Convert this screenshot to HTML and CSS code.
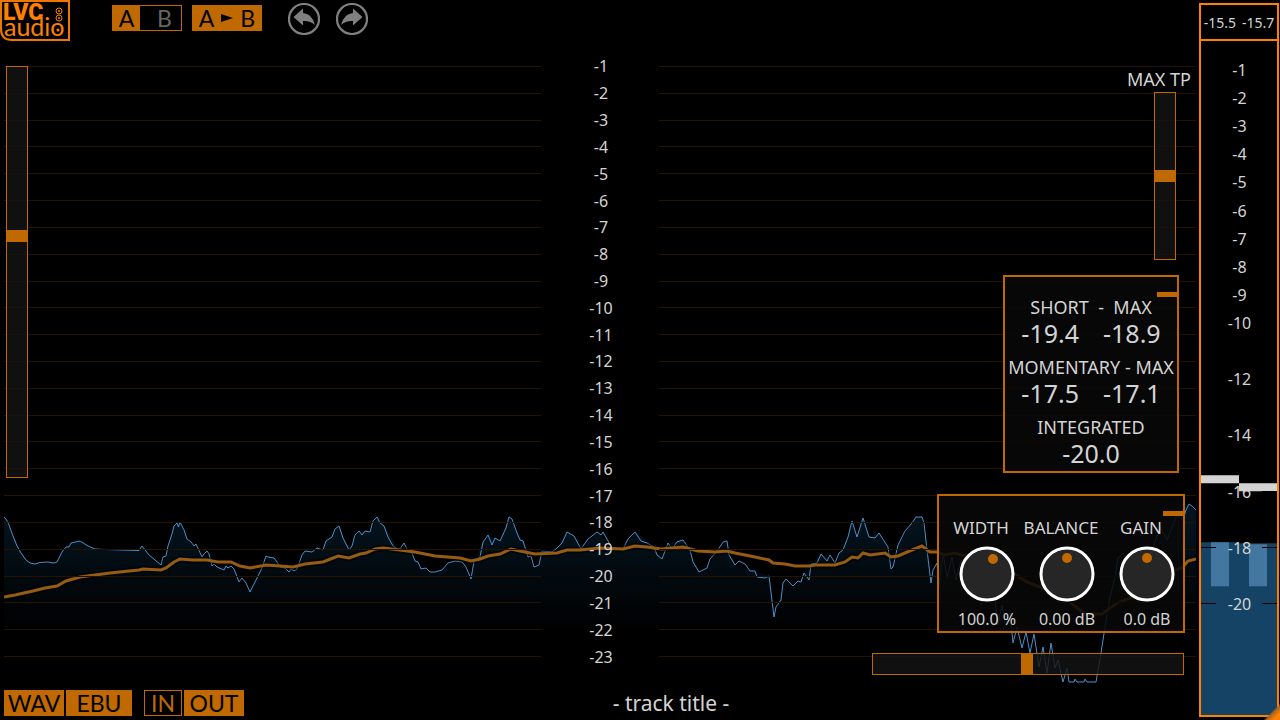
FILE: index.html
```html
<!DOCTYPE html>
<html lang="en">
<head>
<meta charset="utf-8">
<meta name="viewport" content="width=device-width, initial-scale=1">
<title>LVC Audio meter</title>
<link rel="stylesheet" href="styles.css">
</head>
<body>
<div class="app">
  <main class="main">
    <header class="toolbar">
      <svg class="logo" viewBox="0 0 70 41" role="img" aria-label="LVC audio">
        <path d="M1 1H69V40H12Q1 40 1 29Z" fill="none" stroke="#ef7600" stroke-width="2"/>
        <text x="3" y="20" class="logo-top">LVC</text>
        <text x="4" y="36" class="logo-name">audio</text>
        <g fill="none" stroke="#ff8000" stroke-width="1">
          <circle cx="59" cy="11" r="3"/><circle cx="59" cy="18" r="3"/>
        </g>
        <g fill="#ff8000"><circle cx="59" cy="11" r="1"/><circle cx="59" cy="18" r="1"/><circle cx="58" cy="30" r="1.500"/></g>
      </svg>
      <button class="toggle" type="button" aria-label="Switch A and B"><span class="toggle-on">A</span><span class="toggle-off">B</span></button>
      <button class="btn copy" type="button" aria-label="Copy A to B">A<svg viewBox="0 0 12 8" width="12" height="8" aria-hidden="true"><path d="M0 0L12 4L0 8Z"/></svg>B</button>
      <button class="round undo" type="button" aria-label="Undo">
        <svg viewBox="0 0 32 32"><circle cx="16" cy="16" r="15" fill="none" stroke="#808080" stroke-width="2.200"/><path d="M5.500 14L15 5.500V10Q24 10.500 27 22Q22 17.500 15 18V22.500Z" fill="#808080"/></svg>
      </button>
      <button class="round" type="button" aria-label="Redo">
        <svg viewBox="0 0 32 32"><circle cx="16" cy="16" r="15" fill="none" stroke="#808080" stroke-width="2.200"/><path d="M26.500 14L17 5.500V10Q8 10.500 5 22Q10 17.500 17 18V22.500Z" fill="#808080"/></svg>
      </button>
    </header>

    <section class="chart" aria-label="Loudness history">
      <svg class="curves" viewBox="4 53 1192 631" preserveAspectRatio="none" aria-hidden="true">
        <defs>
          <linearGradient id="fade" gradientUnits="userSpaceOnUse" x1="0" y1="515" x2="0" y2="630">
            <stop offset="0" stop-color="#04141f"/><stop offset="1" stop-color="#000000"/>
          </linearGradient>
          <path id="momentary" d="M4 517L6 519L9 525L13 536L17 546L21 553L26 560L30 563L35 564L40 562.500L48 562L53 563L57 562L62 552L66 547L69 547L71 543L80 541L88 546L95 549L105 549.500L139 550.500L142 546L149 555L161 565L163 557L166 556L168 546L172 534L174 526L177 523L178.500 527L180 522L184 530L187 539L191 542L194 546L196 544L202 557L204 554L207 551L209 554L212 566L214 564L217 567L224 570L226 566L228 568L231 566L234 569L239 582L242 578L246 583L250 592L253 586L257 578L262 568L266 556L268 557L274 558L277 562L280 567L285 568L289 572L291 569L294 571L297 569L302 555L305 551L312 552L317 548L323 550L326 541L332 537L335 529L339 526L343 538L349 550L352 546L355 535L359 531L362 535L365 531L370 532L373 521L377 517L380 523L384 526L388 537L393 546L399 550L404 543L407 549L412 553L415 561L418 562L421 569L426 568L430 572L435 572L442 570L448 563L455 561L462 562L466 567L471 579L474 561L480 557L483 542L488 535L492 545L495 538L500 541L506 528L509 517L512 519L517 533L520 540L523 541L528 557L531 556L534 567L539 565L542 551L552 552L557 548L562 543L567 532L574 536L581 549L588 539L597 532L601 535L603 532L612 548L623 549L628 539L635 532L641 541L647 543L654 547L657 555L662 559L668 543L672 549L677 542L683 540L690 550L693 562L699 572L707 568L710 559L718 550L723 542L727 541L729 555L735 565L739 561L745 564L750 571L755 571L757 577L765 578L769 576L774 617L776 607L781 600L783 583L786 579L793 586L798 581L801 582L804 573L809 580L811 564L817 563L821 554L827 561L830 555L835 563L839 553L843 550L848 537L852 521L857 537L863 518L869 537L875 538L879 533L888 547L891 569L893 567L898 545L905 531L912 523L916 517L922 517L924 523L927 550L931 583L933 570L937 563L939 587L943 553L947 578L952 557L956 580L961 560L965 587L970 570L975 598L978 580L981 605L985 583L990 603L994 590L998 625L1002 605L1005 623L1010 613L1013 643L1017 627L1022 648L1026 632L1030 653L1034 634L1039 667L1043 647L1047 673L1051 643L1055 668L1058 660L1063 682L1067 668L1069 682L1074 682L1075 679L1077 682L1084 682L1085 679L1087 682L1096 682L1101 653L1105 627L1110 597L1115 577L1118 558L1123 553L1132 575L1142 582L1153 547L1160 527L1167 540L1177 515L1183 520L1186 510L1189 504L1192 506L1196 510"/>
          <path id="integrated" d="M4 597L15 595L33 591L45 588L57 586L66 581L80 577L110 573L139 570L143 569L161 570L166 568L174 562L180 559L193 560L207 560L218 562L231 562L240 566L250 568L266 565L280 566L293 567L305 564L323 562L338 556L349 558L360 554L366 553L375 549L383 548L400 550L415 552L435 556L460 558L471 561L480 559L488 556L500 554L511 549L520 551L535 554L557 553L567 550L580 550L600 548L623 549L635 546L647 547L661 549L683 547L698 551L715 552L727 551L735 553L755 557L769 560L773 563L785 564L795 566L809 566L815 565L835 565L845 562L852 557L858 558L863 553L870 555L885 553L891 557L898 556L912 550L922 546L930 552L937 552L945 555L955 553L968 557L990 565L1013 573L1027 582L1040 587L1067 600L1085 614L1102 614L1117 603L1130 598L1147 590L1175 570L1182 568L1188 561L1196 559"/>
        </defs>
        <path d="M4 517L13 536L26 560L35 564L57 562L62 552L71 543L80 541L95 549L139 550L142 546L161 565L166 556L174 526L180 522L187 539L202 557L209 554L212 566L226 566L234 569L239 582L250 592L266 556L274 558L289 572L297 569L305 551L323 550L326 541L339 526L349 550L359 531L370 532L377 517L384 526L399 550L412 553L421 569L435 572L455 561L466 567L471 579L474 561L483 542L488 535L500 541L509 517L523 541L528 557L534 567L539 565L542 551L557 548L567 532L574 536L581 549L597 532L612 548L623 549L635 532L654 547L662 559L668 543L683 540L690 550L699 572L707 568L727 541L735 565L755 571L769 576L774 617L781 600L786 579L801 582L811 564L821 554L835 563L848 537L852 521L857 537L863 518L869 537L879 533L888 547L891 569L898 545L916 517L922 517L931 583L943 553L965 587L1005 623L1058 660L1096 682L1110 597L1123 553L1142 582L1160 527L1189 504L1196 510V684H4Z" fill="url(#fade)"/>
        <use href="#momentary" class="line-blue"/>
        <use href="#integrated" class="line-shadow"/>
        <use href="#integrated" class="line-orange"/>
      </svg>
      <ol class="scale">
        <li>-1</li><li>-2</li><li>-3</li><li>-4</li><li>-5</li><li>-6</li><li>-7</li><li>-8</li><li>-9</li><li>-10</li><li>-11</li><li>-12</li><li>-13</li><li>-14</li><li>-15</li><li>-16</li><li>-17</li><li>-18</li><li>-19</li><li>-20</li><li>-21</li><li>-22</li><li>-23</li>
      </ol>

      <input class="slider vertical range-slider" type="range" min="0" max="100" value="59" aria-label="Scale range">

      <div class="maxtp">
        <label for="maxtp">MAX TP</label>
        <input id="maxtp" class="slider vertical" type="range" min="0" max="100" value="50">
      </div>

      <section class="panel stats" aria-label="Loudness">
        <button class="collapse" type="button" aria-label="Collapse loudness panel"></button>
        <h2>SHORT&nbsp; -&nbsp; MAX</h2>
        <p><span>-19.4</span><span>-18.9</span></p>
        <h2>MOMENTARY - MAX</h2>
        <p><span>-17.5</span><span>-17.1</span></p>
        <h2>INTEGRATED</h2>
        <p><span>-20.0</span></p>
      </section>

      <section class="panel knobs" aria-label="Output controls">
        <button class="collapse" type="button" aria-label="Collapse output panel"></button>
        <div class="knob">
          <label for="width">WIDTH</label>
          <span class="dial"><svg viewBox="0 0 56 56" aria-hidden="true"><circle cx="28" cy="28" r="26" class="ring"/><circle cx="34" cy="13" r="5" class="dot"/></svg><input id="width" type="range" min="0" max="200" value="100"></span>
          <output for="width">100.0 %</output>
        </div>
        <div class="knob">
          <label for="balance">BALANCE</label>
          <span class="dial"><svg viewBox="0 0 56 56" aria-hidden="true"><circle cx="28" cy="28" r="26" class="ring"/><circle cx="28" cy="12" r="5" class="dot"/></svg><input id="balance" type="range" min="-12" max="12" value="0"></span>
          <output for="balance">0.00 dB</output>
        </div>
        <div class="knob">
          <label for="gain">GAIN</label>
          <span class="dial"><svg viewBox="0 0 56 56" aria-hidden="true"><circle cx="28" cy="28" r="26" class="ring"/><circle cx="28" cy="12" r="5" class="dot"/></svg><input id="gain" type="range" min="-12" max="12" value="0"></span>
          <output for="gain">0.0 dB</output>
        </div>
      </section>

      <input class="slider time-slider" type="range" min="0" max="300" value="149" aria-label="Time span">
    </section>

    <footer class="footer">
      <button class="btn wav" type="button">WAV</button>
      <button class="btn ebu" type="button">EBU</button>
      <button class="btn in" type="button">IN</button>
      <button class="btn out" type="button">OUT</button>
      <p class="title">- track title -</p>
    </footer>
  </main>

  <aside class="meter" aria-label="Peak meter">
    <div class="peaks"><span>-15.5</span><span>-15.7</span></div>
    <div class="bars">
      <svg class="levels" viewBox="0 0 76 675" preserveAspectRatio="none" aria-hidden="true">
        <path d="M0 502H38V503H76V675H0Z" fill="#154366"/>
        <path d="M10 502H28V546H10ZM48 504H66V546H48Z" fill="#44779f"/>
        <path d="M0 435H38V443H76V451H38V443H0Z" fill="#d4d4d4"/>
      </svg>
      <ol class="meter-scale">
        <li>-1</li><li>-2</li><li>-3</li><li>-4</li><li>-5</li><li>-6</li><li>-7</li><li>-8</li><li>-9</li><li>-10</li><li class="row-12">-12</li><li class="row-14">-14</li><li class="row-16">-16</li><li class="row-18">-18</li><li class="row-20">-20</li>
      </ol>
    </div>
    <span class="grip"></span>
  </aside>
</div>
</body>
</html>
```
FILE: styles.css
```css
* { box-sizing: border-box; }

body {
  margin: 0;
  background: #000;
  color: #d4d4d4;
  font: 16px/20px "Noto Sans", "Open Sans", sans-serif;
}

button, input, p, h2, ol { margin: 0; padding: 0; }
ol { list-style: none; }
button { border: 0; background: none; font: inherit; color: inherit; cursor: pointer; }

.app {
  display: grid;
  grid-template-columns: minmax(0, 1fr) 81px;
  min-height: 100vh;
}
.main { display: flex; flex-direction: column; min-width: 0; }

/* Toolbar */
.toolbar { display: flex; align-items: flex-start; height: 53px; }
.logo { width: 70px; height: 41px; margin-right: 42px; }
.logo-top { font: 900 23px Roboto, sans-serif; fill: #ff8000; }
.logo-name { font: 400 25px Lato, sans-serif; fill: #ff8000; }

.btn, .toggle {
  height: 26px;
  font-family: Lato, sans-serif;
  font-size: 23px;
  line-height: 24px;
  background: #bf6900;
  color: #000;
  text-align: center;
}
.toggle { display: flex; width: 70px; margin: 5px 10px 0 0; border: 1px solid #bf6900; }
.toggle-on { width: 27px; }
.toggle-off { flex: 1; height: 24px; padding-left: 8px; background: #000; color: #666; }
.copy { display: flex; align-items: center; justify-content: center; gap: 7px; width: 70px; margin: 5px 26px 0 0; }
.round { width: 32px; height: 32px; margin-top: 3px; }
.round svg { display: block; }
.undo { margin-right: 16px; }

/* Loudness history */
.chart { position: relative; display: grid; flex: 1; grid-template: minmax(0, 1fr) / minmax(0, 1fr); margin: 0 3px 0 4px; }
.curves { position: absolute; inset: 0; width: 100%; height: 100%; }
.curves use { fill: none; }
.line-blue { stroke: #4a8fc8; stroke-width: 1; }
.line-shadow { stroke: #000; stroke-opacity: .4; stroke-width: 7; }
.line-orange { stroke: #965c13; stroke-width: 3; }

.scale { position: relative; display: grid; grid-auto-rows: 1fr; padding-bottom: 14px; }
.scale li { display: grid; grid-template-columns: 1fr 118px 1fr; align-items: center; text-align: center; text-indent: 2px; line-height: 16px; }
.scale li::before, .scale li::after { content: ""; height: 1px; background: #241300; }

.slider {
  display: block;
  appearance: none;
  width: 312px;
  height: 22px;
  background: rgba(20, 20, 20, .8);
  box-shadow: inset 0 0 0 1px #bf6900;
}
.slider::-webkit-slider-thumb { appearance: none; width: 12px; height: 22px; border: 0; background: #bf6900; }
.vertical { writing-mode: vertical-lr; direction: rtl; width: 22px; height: 168px; }
.vertical::-webkit-slider-thumb { width: 22px; height: 12px; }
.range-slider { position: absolute; left: 2px; top: 13px; height: 412px; }
.time-slider { position: absolute; right: 12px; bottom: 9px; }

.maxtp { position: absolute; right: 5px; top: 16px; display: flex; flex-direction: column; align-items: center; gap: 3px; font-size: 18px; }
.maxtp .slider { margin-left: 12px; }

.panel { position: absolute; border: 2px solid #bf6900; background: rgba(8, 8, 8, .86); }
.collapse { position: absolute; right: -2px; top: 15px; width: 22px; height: 5px; background: #bf6900; }

.stats { right: 17px; top: 222px; width: 176px; padding: 19px 0 3px; text-align: center; white-space: nowrap; }
.stats h2 { display: flex; justify-content: center; font-size: 18px; font-weight: 400; line-height: 22px; }
.stats p { display: flex; justify-content: center; gap: 24px; height: 38px; font-size: 25px; line-height: 30px; }
.stats p:last-child { height: 30px; }

.knobs { right: 11px; bottom: 51px; width: 248px; padding: 22px 0 2px 8px; display: grid; grid-template-columns: repeat(3, 80px); }
.knob { display: flex; flex-direction: column; align-items: center; }
.knob label { padding-right: 12px; font-size: 17px; white-space: nowrap; }
.knob output { margin-top: 7px; font-size: 16px; }
.dial { display: block; position: relative; width: 56px; height: 56px; margin-top: 8px; }
.dial svg { display: block; }
.dial input { position: absolute; inset: 0; width: 100%; height: 100%; opacity: 0; }
.ring { fill: #262626; stroke: #fff; stroke-width: 3; }
.dot { fill: #bf6900; }

/* Footer */
.footer { display: flex; align-items: center; gap: 2px; padding: 6px 103px 4px 4px; }
.wav { width: 60px; }
.ebu { width: 66px; }
.in { width: 38px; margin-left: 10px; border: 1px solid #bf6900; background: #000; color: #bf6900; }
.out { width: 60px; }
.title { flex: 1; text-align: center; font-size: 21px; line-height: 26px; }

/* Peak meter */
.meter { position: relative; display: flex; flex-direction: column; padding: 3px 1px 3px 0; }
.peaks { display: flex; justify-content: center; gap: 6px; height: 38px; border: 2px solid #ff8000; font-size: 14px; line-height: 36px; white-space: nowrap; }
.bars { position: relative; display: grid; flex: 1; grid-template: minmax(0, 1fr) / minmax(0, 1fr); margin-top: -2px; border: 2px solid #ff8000; }
.levels { position: absolute; inset: 0; width: 100%; height: 100%; }
.meter-scale { position: relative; display: grid; grid-template-rows: repeat(20, minmax(0, 1fr)); padding: 15px 0 97px; }
.meter-scale li { display: grid; grid-template-columns: 15px 1fr 15px; align-items: center; text-align: center; text-indent: 1px; line-height: 16px; }
.meter-scale li::before, .meter-scale li::after { content: ""; height: 1px; background: #000; }
.meter-scale .row-12 { grid-row: 12; }
.meter-scale .row-14 { grid-row: 14; }
.meter-scale .row-16 { grid-row: 16; }
.meter-scale .row-18 { grid-row: 18; }
.meter-scale .row-20 { grid-row: 20; }
.grip { position: absolute; right: 0; bottom: 0; width: 17px; height: 17px; background: linear-gradient(135deg, transparent 50%, #a86420 58%, #ff8000 80%); }
```
